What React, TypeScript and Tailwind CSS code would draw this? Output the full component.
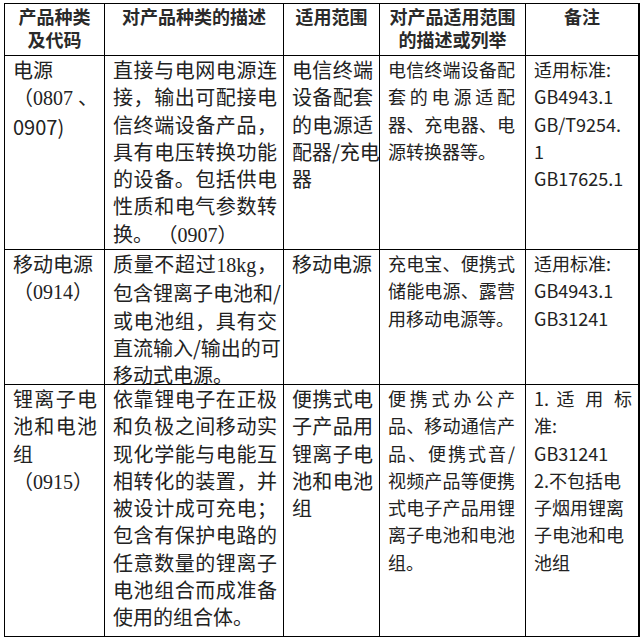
import React from "react";

type L = { t: React.ReactNode; j?: boolean };

const S = ({ children }: { children: React.ReactNode }) => (
  <span className="font-['Liberation_Serif','Noto_Sans_CJK_SC',serif]">{children}</span>
);

const Cell = ({
  lines,
  size,
  last,
  pr = "pr-[6px]",
}: {
  lines: L[];
  size: "big" | "small";
  last?: boolean;
  pr?: string;
}) => (
  <div
    className={`border-r border-b border-black pl-[8px] ${pr} ${
      size === "big" ? "text-[20px]" : "text-[18px]"
    } leading-[27.3px] ${last ? "border-r-2" : ""}`}
  >
    {lines.map((l, i) => (
      <div
        key={i}
        className={l.j ? "text-justify [text-align-last:justify] whitespace-nowrap" : "whitespace-nowrap"}
      >
        {l.t}
      </div>
    ))}
  </div>
);

const H = ({ lines, last }: { lines: string[]; last?: boolean }) => (
  <div
    className={`border-r border-b border-black pt-[1px] text-center text-[18px] font-bold leading-[23px] text-[#2a2a2a] ${
      last ? "border-r-2" : ""
    }`}
  >
    {lines.map((l, i) => (
      <div key={i}>{l}</div>
    ))}
  </div>
);

const j = (t: React.ReactNode): L => ({ t, j: true });
const n = (t: React.ReactNode): L => ({ t });

export default function App() {
  return (
    <div className="h-[640px] w-[642px] bg-white font-['Noto_Sans_CJK_SC',sans-serif] text-[#222]">
      <div className="pl-[4px] pt-[3px]">
        <div className="grid w-max grid-cols-[100px_179px_96px_146px_114px] grid-rows-[52px_194px_135px_252px] border-l border-t border-black">
          <H lines={["产品种类", "及代码"]} />
          <H lines={["对产品种类的描述"]} />
          <H lines={["适用范围"]} />
          <H lines={["对产品适用范围", "的描述或列举"]} />
          <H lines={["备注"]} last />

          <Cell
            size="big"
            pr="pr-[7px]"
            lines={[n("电源"), n(<S>（0807 、</S>), n("0907)")]}
          />
          <Cell
            size="big"
            lines={[
              j("直接与电网电源连"),
              j("接，输出可配接电"),
              j("信终端设备产品，"),
              j("具有电压转换功能"),
              j("的设备。包括供电"),
              j("性质和电气参数转"),
              n(
                <>
                  换。 <S>（0907）</S>
                </>
              ),
            ]}
          />
          <Cell
            size="big"
            lines={[j("电信终端"), j("设备配套"), j("的电源适"), j("配器/充电"), n("器")]}
          />
          <Cell
            size="small"
            pr="pr-[10px]"
            lines={[j("电信终端设备配"), j("套的电源适配"), j("器、充电器、电"), n("源转换器等。")]}
          />
          <Cell
            size="small"
            last
            lines={[n("适用标准:"), n("GB4943.1"), n("GB/T9254."), n("1"), n("GB17625.1")]}
          />

          <Cell size="big" pr="pr-[7px]" lines={[n("移动电源"), n(<S>（0914）</S>)]} />
          <Cell
            size="big"
            lines={[
              j(
                <>
                  质量不超过<S>18kg</S>，
                </>
              ),
              j("包含锂离子电池和/"),
              j("或电池组，具有交"),
              j("直流输入/输出的可"),
              n("移动式电源。"),
            ]}
          />
          <Cell size="big" lines={[n("移动电源")]} />
          <Cell
            size="small"
            pr="pr-[10px]"
            lines={[j("充电宝、便携式"), j("储能电源、露营"), n("用移动电源等。")]}
          />
          <Cell size="small" last lines={[n("适用标准:"), n("GB4943.1"), n("GB31241")]} />

          <Cell
            size="big"
            pr="pr-[7px]"
            lines={[j("锂离子电"), j("池和电池"), n("组"), n(<S>（0915）</S>)]}
          />
          <Cell
            size="big"
            lines={[
              j("依靠锂电子在正极"),
              j("和负极之间移动实"),
              j("现化学能与电能互"),
              j("相转化的装置，并"),
              j("被设计成可充电；"),
              j("包含有保护电路的"),
              j("任意数量的锂离子"),
              j("电池组合而成准备"),
              n("使用的组合体。"),
            ]}
          />
          <Cell
            size="big"
            lines={[j("便携式电"), j("子产品用"), j("锂离子电"), j("池和电池"), n("组")]}
          />
          <Cell
            size="small"
            pr="pr-[10px]"
            lines={[
              j("便携式办公产"),
              j("品、移动通信产"),
              j("品、便携式音/"),
              j("视频产品等便携"),
              j("式电子产品用锂"),
              j("离子电池和电池"),
              n("组。"),
            ]}
          />
          <Cell
            size="small"
            last
            lines={[
              j("1. 适 用 标"),
              n("准:"),
              n("GB31241"),
              n("2.不包括电"),
              n("子烟用锂离"),
              n("子电池和电"),
              n("池组"),
            ]}
          />
        </div>
      </div>
    </div>
  );
}
